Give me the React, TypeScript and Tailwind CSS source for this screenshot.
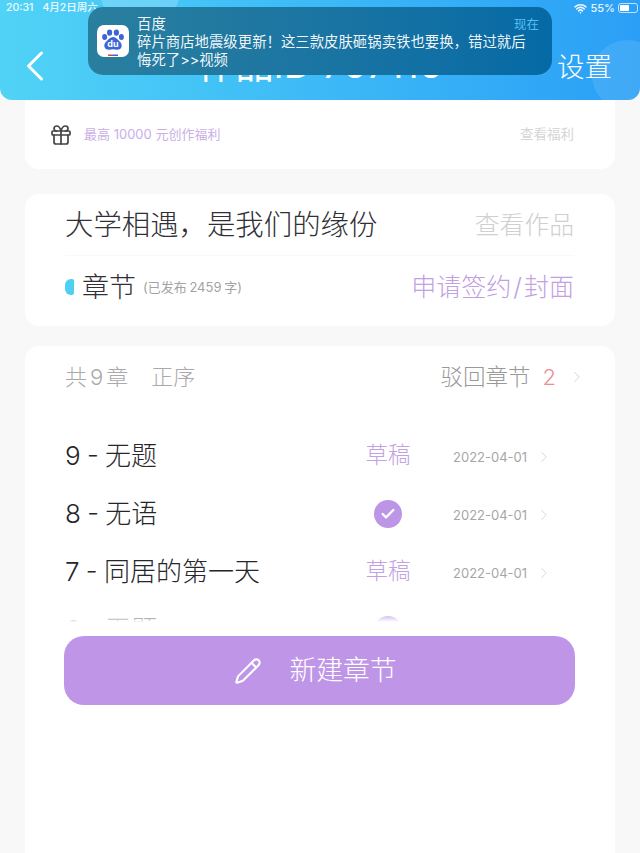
import { Pencil, Gift, ChevronRight, Check, Wifi } from "lucide-react";

const font = "font-['Inter','Noto_Sans_CJK_SC',sans-serif]";

const chapters = [
  { title: "9 - 无题", draft: true },
  { title: "8 - 无语", draft: false },
  { title: "7 - 同居的第一天", draft: true },
  { title: "6 - 无题", draft: false },
];

const BaiduIcon = () => (
  <svg viewBox="0 0 32 32" className="w-[32px] h-[32px] shrink-0">
    <rect width="32" height="32" rx="7" fill="#fff" />
    <g fill="#3c66d8">
      <ellipse cx="7.6" cy="12" rx="2.5" ry="3" />
      <ellipse cx="12.6" cy="7.6" rx="2.6" ry="3.2" />
      <ellipse cx="19.4" cy="7.6" rx="2.6" ry="3.2" />
      <ellipse cx="24.4" cy="12" rx="2.5" ry="3" />
      <path d="M16 12c3 0 4.5 2.4 6.4 4.2 2 1.9 2.6 3.4 2.2 5.2-.5 2.4-2.6 3.6-5 3.3-1.300-.2-2.400-.5-3.600-.5s-2.300.3-3.600.5c-2.400.3-4.500-.9-5-3.300-.4-1.800.2-3.300 2.200-5.200C11.500 14.400 13 12 16 12z" />
    </g>
    <text x="16" y="22" textAnchor="middle" fontSize="9" fontWeight="700" fill="#fff" fontFamily="Inter, sans-serif">
      du
    </text>
    <rect x="11" y="29.500" width="5" height="1.500" fill="#d8433a" />
    <rect x="16" y="29.500" width="5" height="1.500" fill="#3c66d8" />
  </svg>
);

const BackArrow = () => (
  <svg viewBox="0 0 18 30" className="relative w-[18px] h-[30px]" fill="none" stroke="#fff" strokeWidth="3" strokeLinecap="round" strokeLinejoin="round">
    <path d="M15.500 2 2.500 15l13 13" />
  </svg>
);

const App = () => {
  return (
    <div className={`relative w-[640px] h-[853px] overflow-hidden bg-[#f8f8f8] ${font}`}>
      {/* header */}
      <div className="relative h-[100px] rounded-b-[12px] overflow-hidden bg-gradient-to-r from-[#50d3f6] to-[#2b9ff6] flex items-end justify-between pb-[19px] pl-[26px] pr-[28px] text-white">
        <div className="absolute left-[100px] -top-[50px] w-[80px] h-[80px] rounded-full bg-white/20"></div>
        <div className="absolute -right-[22px] top-[40px] w-[70px] h-[70px] rounded-full bg-white/10"></div>
        <BackArrow />
        <p className="absolute left-0 right-0 top-[41px] text-center text-[38px] leading-[46px]">作品ID 767116</p>
        <p className="relative -mb-[6px] text-[27.500px] leading-[40px] font-light">设置</p>
      </div>

      {/* status bar */}
      <div className="absolute left-[6px] right-[2px] top-[1px] h-[14px] flex items-center justify-between text-white/90 text-[10.500px] font-medium">
        <div className="flex items-center gap-[9px]">
          <span>20:31</span>
          <span>4月2日周六</span>
        </div>
        <div className="flex items-center gap-[3px] text-[11px]">
          <Wifi className="w-[13px] h-[13px]" strokeWidth={3} />
          <span>55%</span>
          <div className="w-[20px] h-[10px] rounded-[3px] border border-white/70 p-[1px]">
            <div className="w-[55%] h-full bg-white rounded-[1px]"></div>
          </div>
        </div>
      </div>

      {/* notification */}
      <div className="absolute left-[88px] top-[7px] w-[464px] h-[68px] rounded-[15px] bg-gradient-to-r from-[#2a7f9f] to-[#056aa5] flex gap-[8px] pl-[9px] pt-[18px] text-white">
        <BaiduIcon />
        <div className="-mt-[10px] text-[14.400px] leading-[18px] text-white/95">
          <p>百度</p>
          <p>碎片商店地震级更新！这三款皮肤砸锅卖铁也要换，错过就后</p>
          <p>悔死了&gt;&gt;视频</p>
        </div>
        <span className="absolute right-[13px] top-[9px] text-[12.500px] leading-[18px] text-[#55c0f0]">现在</span>
      </div>

      <div className="px-[25px]">
        {/* welfare card */}
        <div className="h-[69px] rounded-b-[14px] bg-white flex items-center pl-[24px] pr-[41px]">
          <Gift className="w-[24px] h-[24px] text-[#444]" strokeWidth={1.7} />
          <p className="ml-[11px] flex-1 text-[13px] text-[#c9afe6]">最高 10000 元创作福利</p>
          <p className="text-[13.500px] text-[#d6d6d6]">查看福利</p>
        </div>

        {/* work card */}
        <div className="mt-[25px] h-[132px] rounded-[14px] bg-white pl-[40px] pr-[41px]">
          <div className="h-[62px] flex items-center justify-between border-b border-[#f9f9f9]">
            <p className="mt-[2px] text-[28.400px] text-[#2f2f35] font-light">大学相遇，是我们的缘份</p>
            <p className="mt-[2px] text-[24.800px] text-[#d0d0d0] font-light">查看作品</p>
          </div>
          <div className="h-[62px] flex items-center">
            <div className="w-[9px] h-[16px] rounded-l-[6px] rounded-r-[2px] bg-[#4dd0f2]"></div>
            <p className="ml-[8px] mt-[2px] text-[27px] text-[#2f2f35] font-light">章节</p>
            <p className="ml-[7px] mt-[1px] text-[13px] text-[#a3a3a3] [word-spacing:-1px]">(已发布 2459 字)</p>
            <p className="ml-auto mt-[2px] text-[25px] text-[#c2a0e4] font-light">
              申请签约<span className="mx-[2px]">/</span>封面
            </p>
          </div>
        </div>

        {/* chapter card */}
        <div className="mt-[20px] h-[520px] rounded-t-[14px] bg-white">
          <div className="h-[62px] pl-[40px] pr-[29px] flex items-center text-[22px] font-light">
            <p className="text-[#aaaaaa]">
              共<span className="mx-[3px]">9</span>章
            </p>
            <p className="ml-[23px] text-[#aaaaaa]">正序</p>
            <p className="ml-auto text-[22.500px] text-[#999999]">驳回章节</p>
            <p className="ml-[12px] text-[#ec8f95]">2</p>
            <ChevronRight className="ml-[12px] w-[18px] h-[18px] text-[#d0d0d0]" strokeWidth={1.25} />
          </div>

          <div className="relative mt-[19px] h-[195px] overflow-hidden">
            {chapters.map((c, i) => (
              <div key={i} className="h-[58px] pl-[40px] flex items-center">
                <p className="w-[291px] -mt-[2px] text-[26px] text-[#26262b] font-light [word-spacing:-1px]">{c.title}</p>
                <div className="w-[64px] flex justify-center">
                  {c.draft ? (
                    <p className="-mt-[2px] text-[22.500px] text-[#c2a0e4] font-light">草稿</p>
                  ) : (
                    <div className="w-[28px] h-[28px] rounded-full bg-[#bd95e6] flex items-center justify-center">
                      <Check className="w-[16px] h-[16px] text-white" strokeWidth={3.5} />
                    </div>
                  )}
                </div>
                <p className="ml-[33px] mt-[3px] w-[74px] text-[13px] text-[#a6a6a6] whitespace-nowrap">2022-04-01</p>
                <ChevronRight className="ml-[8px] mt-[2px] w-[18px] h-[18px] text-[#d4d4d4]" strokeWidth={1.25} />
              </div>
            ))}
            <div className="absolute left-0 right-0 bottom-0 h-[10px] bg-gradient-to-b from-white/0 to-white"></div>
          </div>

          <div className="mt-[14px] ml-[39px] mr-[40px] h-[69px] rounded-[20px] bg-[#bf96e7] flex items-center justify-center pr-[8px] text-white">
            <Pencil className="w-[28px] h-[28px]" strokeWidth={1.8} />
            <p className="ml-[27px] text-[26.800px] font-light">新建章节</p>
          </div>
        </div>
      </div>
    </div>
  );
};

export default App;
